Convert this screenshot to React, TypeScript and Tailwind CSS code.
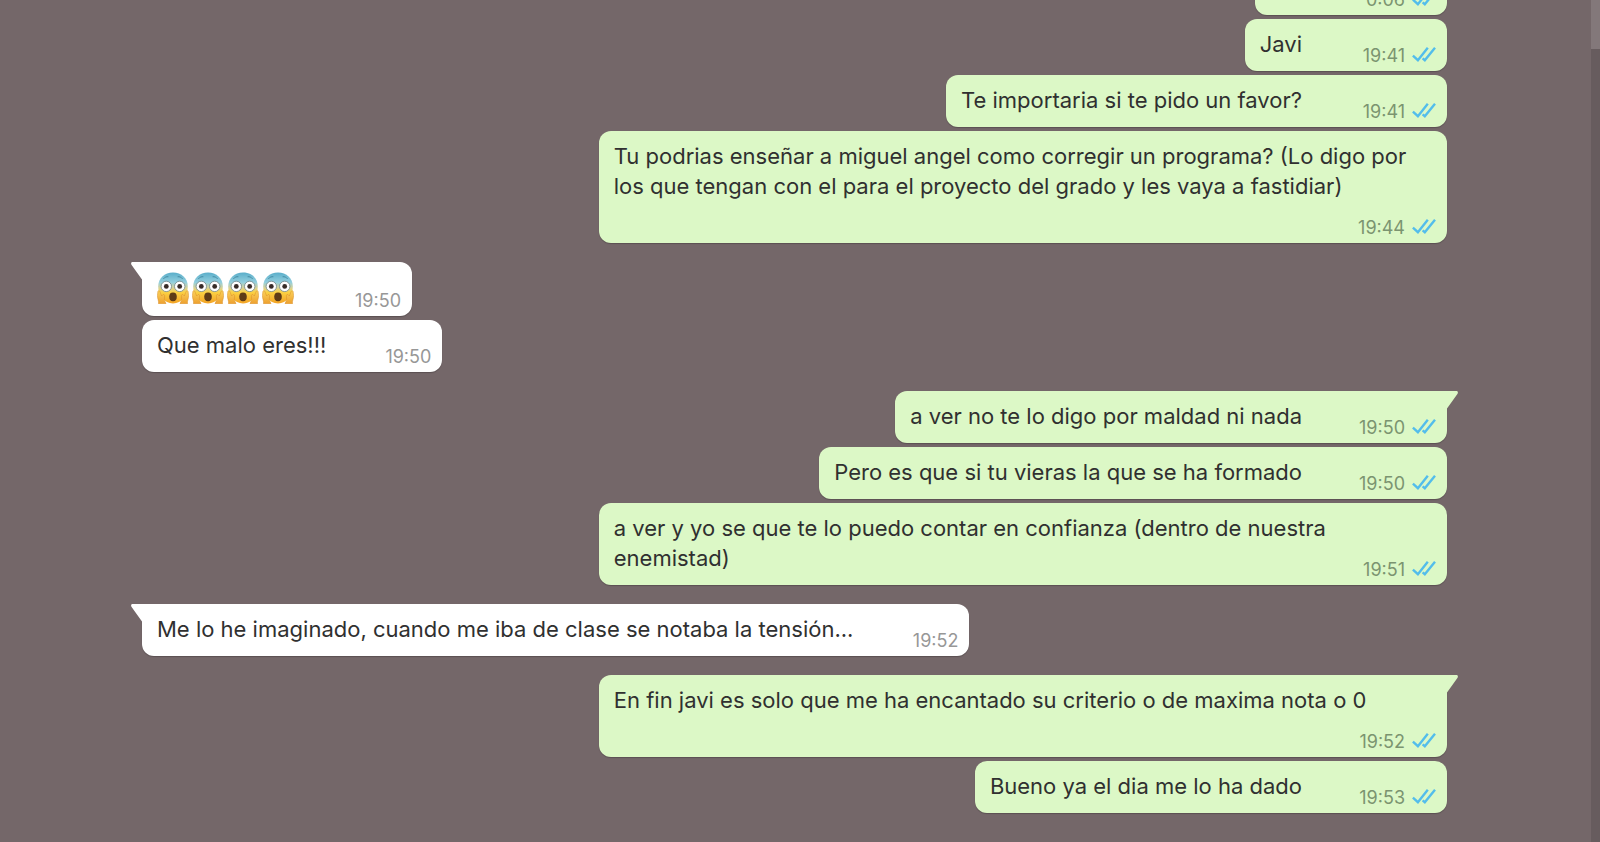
import React from "react";

type Message = {
  id: number;
  from: "me" | "them";
  text?: string;
  screams?: number;
  time: string;
  voice?: boolean;
  startsGroup?: boolean;
};

const messages: Message[] = [
  { id: 1, from: "me", time: "0:06", voice: true },
  { id: 2, from: "me", text: "Javi", time: "19:41" },
  { id: 3, from: "me", text: "Te importaria si te pido un favor?", time: "19:41" },
  {
    id: 4,
    from: "me",
    text: "Tu podrias enseñar a miguel angel como corregir un programa? (Lo digo por los que tengan con el para el proyecto del grado y les vaya a fastidiar)",
    time: "19:44",
  },
  { id: 5, from: "them", screams: 4, time: "19:50", startsGroup: true },
  { id: 6, from: "them", text: "Que malo eres!!!", time: "19:50" },
  { id: 7, from: "me", text: "a ver no te lo digo por maldad ni nada", time: "19:50", startsGroup: true },
  { id: 8, from: "me", text: "Pero es que si tu vieras la que se ha formado", time: "19:50" },
  {
    id: 9,
    from: "me",
    text: "a ver y yo se que te lo puedo contar en confianza (dentro de nuestra enemistad)",
    time: "19:51",
  },
  {
    id: 10,
    from: "them",
    text: "Me lo he imaginado, cuando me iba de clase se notaba la tensión...",
    time: "19:52",
    startsGroup: true,
  },
  {
    id: 11,
    from: "me",
    text: "En fin javi es solo que me ha encantado su criterio o de maxima nota o 0",
    time: "19:52",
    startsGroup: true,
  },
  { id: 12, from: "me", text: "Bueno ya el dia me lo ha dado", time: "19:53" },
];

function DoubleCheck() {
  return (
    <svg className="mb-[3px]" width="24" height="15" viewBox="0 0 24 15" fill="none" stroke="#53bdeb" strokeWidth="2.4" aria-label="Leído" role="img">
      <path d="M0.9 8.6 L5.9 13.2 L15.8 0.8" />
      <path d="M10.6 11.4 L12.8 13.2 L23 0.8" />
    </svg>
  );
}

function Tail({ side }: { side: "left" | "right" }) {
  return side === "left" ? (
    <svg className="absolute top-0 -left-[11px]" width="24" height="19" viewBox="0 0 24 19" fill="#ffffff" aria-hidden="true">
      <path d="M24 0H1.6C0.2 0 -0.4 1.4 0.6 2.9L11 17.6V19H24Z" />
    </svg>
  ) : (
    <svg className="absolute top-0 -right-[11px]" width="24" height="19" viewBox="0 0 24 19" fill="#dcf8c6" aria-hidden="true">
      <path d="M0 0H22.4C23.8 0 24.4 1.4 23.4 2.9L13 17.6V19H0Z" />
    </svg>
  );
}

function Scream() {
  return (
    <svg width="32" height="32" viewBox="0 0 32 32" role="img" aria-label="Cara gritando de miedo">
      <defs>
        <linearGradient id="scream-face" x1="0" y1="0" x2="0" y2="1">
          <stop offset="0" stopColor="#5aaeca" />
          <stop offset="0.32" stopColor="#93cfde" />
          <stop offset="0.5" stopColor="#d8d296" />
          <stop offset="0.64" stopColor="#fbd144" />
          <stop offset="1" stopColor="#f3a325" />
        </linearGradient>
        <linearGradient id="scream-hand" x1="0" y1="0" x2="0" y2="1">
          <stop offset="0" stopColor="#fbd25a" />
          <stop offset="1" stopColor="#eda02f" />
        </linearGradient>
      </defs>
      <path d="M16 0.5C7.5 0.5 1.2 6.2 1.2 14.6C1.2 23.5 7.2 31.4 16 31.4S30.8 23.5 30.8 14.6C30.8 6.2 24.5 0.5 16 0.5Z" fill="url(#scream-face)" />
      <path d="M6.6 6.6C7.7 5.2 9.4 4.5 11 4.7M25.4 6.6C24.3 5.2 22.6 4.5 21 4.7" fill="none" stroke="#397f99" strokeWidth="0.8" strokeLinecap="round" />
      <circle cx="9.3" cy="14.4" r="5.2" fill="#ffffff" stroke="#71868a" strokeWidth="0.8" />
      <circle cx="22.7" cy="14.4" r="5.2" fill="#ffffff" stroke="#71868a" strokeWidth="0.8" />
      <circle cx="9.3" cy="14.4" r="2.4" fill="#382c28" />
      <circle cx="22.7" cy="14.4" r="2.4" fill="#382c28" />
      <ellipse cx="16" cy="24.8" rx="3.8" ry="4.4" fill="#5e3b17" />
      <path
        d="M0.9 19.2C1.4 18.3 2.6 18.6 3 19.8L4.6 24L5.8 22.8C6.8 22 7.8 22.8 7.6 24L7.4 27.4C7.6 29 8.7 30.2 9 31.8H1.5C2 29 0.4 26.7 0.4 23.7Z"
        fill="url(#scream-hand)"
        stroke="#d98f2b"
        strokeWidth="0.5"
      />
      <path
        d="M31.1 19.2C30.6 18.3 29.4 18.6 29 19.8L27.4 24L26.2 22.8C25.2 22 24.2 22.8 24.4 24L24.6 27.4C24.4 29 23.3 30.2 23 31.8H30.5C30 29 31.6 26.7 31.6 23.7Z"
        fill="url(#scream-hand)"
        stroke="#d98f2b"
        strokeWidth="0.5"
      />
    </svg>
  );
}

function Bubble({ message }: { message: Message }) {
  const mine = message.from === "me";
  const corner = message.startsGroup ? (mine ? "rounded-tr-none" : "rounded-tl-none") : "";
  return (
    <li className={`flex shrink-0 ${mine ? "justify-end" : "justify-start"} ${message.startsGroup ? "mt-[19px]" : "mt-1"}`}>
      <article
        className={`relative grid max-w-[65%] rounded-xl shadow-[0_1px_1px_rgba(0,0,0,0.22)] ${mine ? "bg-[#dcf8c6]" : "bg-white"} ${corner} ${
          message.voice ? "h-[52px] w-48" : ""
        }`}
      >
        {message.startsGroup && <Tail side={mine ? "right" : "left"} />}
        {message.screams && (
          <div className="relative col-start-1 row-start-1 flex gap-[3px] pt-[10px] pr-[118px] pb-3 pl-[15px]">
            {Array.from({ length: message.screams }, (_, i) => (
              <Scream key={i} />
            ))}
          </div>
        )}
        {message.text && (
          <p className="relative col-start-1 row-start-1 px-[15px] pt-[10px] pb-3 text-[22px] leading-[30px] text-[#303030]">
            {message.text}
            <span className={`inline-block h-px ${mine ? "w-[130px]" : "w-[101px]"}`} />
          </p>
        )}
        <div
          className={`relative col-start-1 row-start-1 flex items-center gap-[7px] self-end justify-self-end pr-[11px] pb-[5px] text-[18px] leading-5 ${
            mine ? "text-[#7b9470]" : "text-[#979797]"
          }`}
        >
          <time>{message.time}</time>
          {mine && <DoubleCheck />}
        </div>
      </article>
    </li>
  );
}

export default function App() {
  return (
    <div className="flex h-screen overflow-hidden bg-[#746769] font-['Inter','Liberation_Sans',sans-serif]">
      <main className="flex min-w-0 flex-1 flex-col justify-end overflow-hidden pr-36 pb-[29px] pl-[142px]">
        <ol className="flex flex-col">
          {messages.map((message) => (
            <Bubble key={message.id} message={message} />
          ))}
        </ol>
      </main>
      <div className="w-[9px] shrink-0 bg-[#675c5e]" aria-hidden="true">
        <div className="h-[49px] bg-[#83787a]" />
      </div>
    </div>
  );
}
